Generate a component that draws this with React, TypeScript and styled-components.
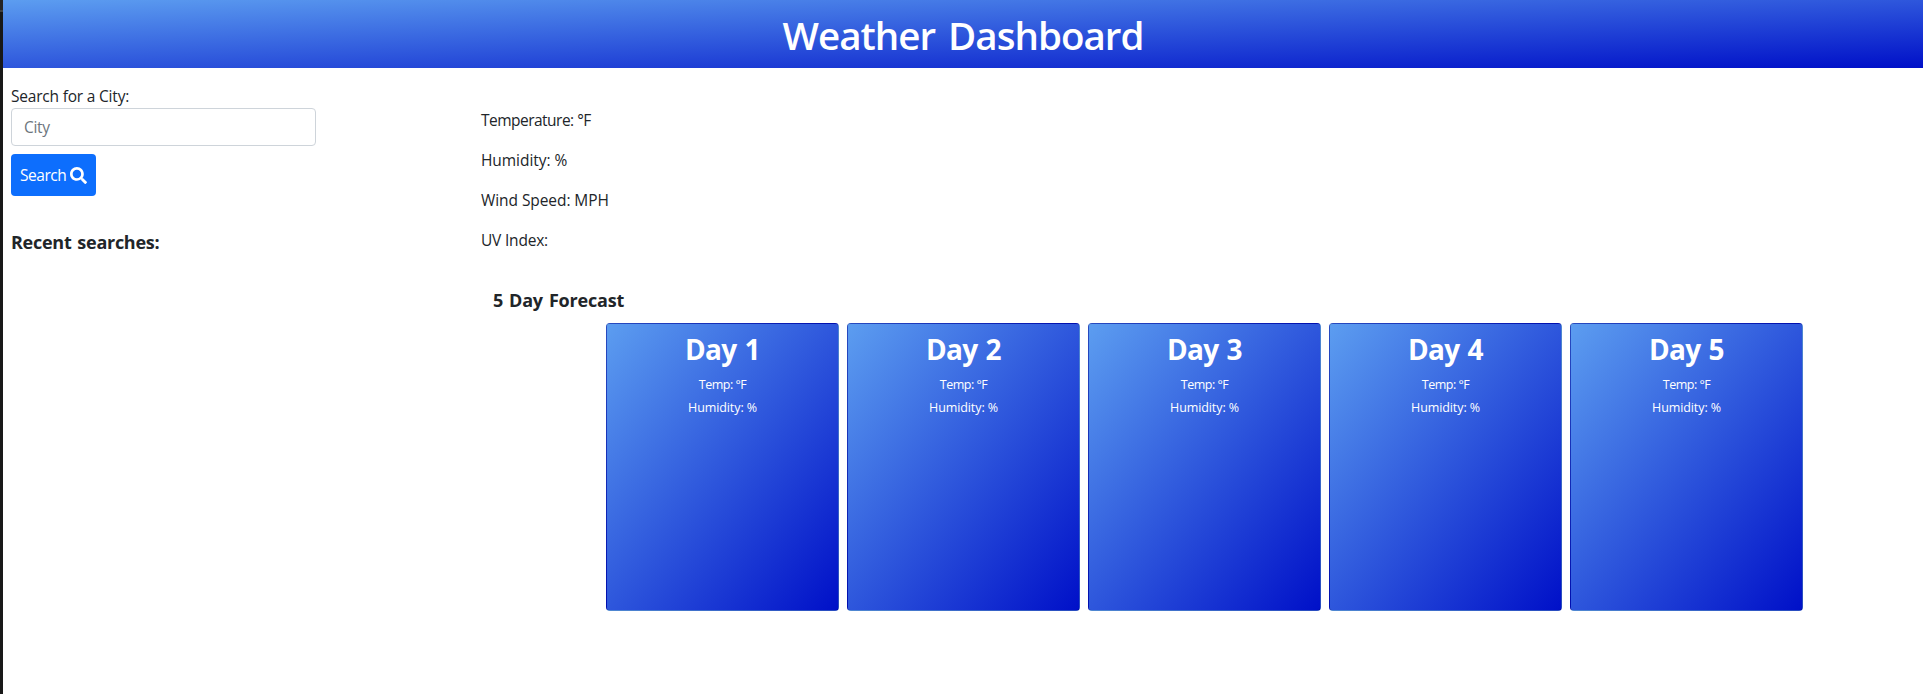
import React from 'react';
import styled, { createGlobalStyle } from 'styled-components';

const GlobalStyle = createGlobalStyle`
  *, *::before, *::after { box-sizing: border-box; }
  body {
    margin: 0;
    background: #fff;
    color: #212529;
    font-family: 'Open Sans', 'Noto Sans', sans-serif;
    font-size: 15.5px;
    line-height: 24px;
  }
`;

const gradient = 'linear-gradient(to bottom right, #5c9df0, #0010c8)';

const Window = styled.div`
  display: grid;
  grid-template-columns: 3px 1fr;
  height: 694px;
  overflow: hidden;
`;

const Edge = styled.div`
  background: linear-gradient(#252525 10px, #404040 10px, #404040 12px, #181818 12px);
`;

const Header = styled.header`
  height: 68px;
  padding-top: 11px;
  background: ${gradient};
  text-align: center;
`;

const Title = styled.h1`
  margin: 0;
  color: #fff;
  font-size: 38.5px;
  font-weight: 600;
  line-height: 48px;
  letter-spacing: -0.98px;
  word-spacing: 4px;
`;

const Main = styled.main`
  display: grid;
  grid-template-columns: 478px 1fr;
  padding-top: 16px;
`;

const SearchPanel = styled.aside`
  display: flex;
  flex-direction: column;
  align-items: flex-start;
  padding-left: 8px;
`;

const Text = styled.span<{ $spacing: number }>`
  letter-spacing: ${(p) => p.$spacing}px;
`;

const CityInput = styled.input`
  width: 305px;
  height: 38px;
  padding: 6px 12px;
  border: 1px solid #ced4da;
  border-radius: 4px;
  background: #fff;
  color: #212529;
  font: inherit;
  letter-spacing: -0.3px;
  &::placeholder { color: #6c757d; opacity: 1; }
`;

const SearchButton = styled.button`
  display: flex;
  align-items: center;
  gap: 4px;
  width: 85px;
  height: 42px;
  margin-top: 8px;
  padding: 0 0 0 9px;
  border: 0;
  border-radius: 4px;
  background: #0d6efd;
  color: #fff;
  font: inherit;
`;

const SearchIcon = styled.svg`
  flex: none;
  width: 17px;
  height: 17px;
  fill: currentColor;
`;

const SectionTitle = styled.h5<{ $spacing: number }>`
  margin: 0;
  font-size: 18px;
  font-weight: 700;
  line-height: 24px;
  letter-spacing: ${(p) => p.$spacing}px;
  word-spacing: 1.5px;
`;

const RecentSearches = styled.section`
  margin-top: 34px;
`;

const Conditions = styled.div`
  display: flex;
  flex-direction: column;
  gap: 16px;
  padding-top: 24px;
`;

const Forecast = styled.section`
  padding: 36px 0 0 12px;
`;

const Cards = styled.div`
  display: flex;
  gap: 8px;
  margin: 11px 0 0 113px;
`;

const Card = styled.article`
  width: 233px;
  height: 288px;
  padding-top: 8px;
  border: 1px solid rgba(0, 0, 0, 0.125);
  border-radius: 4px;
  background: ${gradient};
  color: #fff;
  text-align: center;
`;

const Day = styled.h3`
  margin: 0 0 7px;
  font-size: 28px;
  font-weight: 700;
  line-height: 34px;
  letter-spacing: -0.7px;
  word-spacing: 1.5px;
`;

const Reading = styled.p<{ $spacing: number }>`
  margin: 0;
  font-size: 12.5px;
  line-height: 23px;
  letter-spacing: ${(p) => p.$spacing}px;
`;

const conditions = [
  { label: 'Temperature: °F', spacing: -0.52 },
  { label: 'Humidity: %', spacing: -0.06 },
  { label: 'Wind Speed: MPH', spacing: -0.07 },
  { label: 'UV Index:', spacing: -0.2 },
];

export default function App() {
  return (
    <>
      <GlobalStyle />
      <Window>
        <Edge />
        <div>
          <Header>
            <Title>Weather Dashboard</Title>
          </Header>
          <Main>
            <SearchPanel>
              <Text as="label" htmlFor="city" $spacing={-0.2}>Search for a City:</Text>
              <CityInput id="city" placeholder="City" />
              <SearchButton type="button">
                <Text $spacing={-0.45}>Search</Text>
                <SearchIcon viewBox="0 0 512 512" aria-hidden="true">
                  <path d="M505 442.7 405.3 343c-4.5-4.5-10.6-7-17-7H372c27.6-35.3 44-79.7 44-128C416 93.1 322.9 0 208 0S0 93.1 0 208s93.1 208 208 208c48.3 0 92.7-16.4 128-44v16.3c0 6.4 2.5 12.5 7 17l99.7 99.7c9.4 9.4 24.6 9.4 33.9 0l28.3-28.3c9.4-9.4 9.4-24.6.1-34zM208 336c-70.7 0-128-57.2-128-128 0-70.7 57.2-128 128-128 70.7 0 128 57.2 128 128 0 70.7-57.2 128-128 128z" />
                </SearchIcon>
              </SearchButton>
              <RecentSearches>
                <SectionTitle $spacing={-0.27}>Recent searches:</SectionTitle>
              </RecentSearches>
            </SearchPanel>
            <div>
              <Conditions>
                {conditions.map((c) => (
                  <Text key={c.label} $spacing={c.spacing}>{c.label}</Text>
                ))}
              </Conditions>
              <Forecast>
                <SectionTitle $spacing={-0.2}>5 Day Forecast</SectionTitle>
                <Cards>
                  {[1, 2, 3, 4, 5].map((n) => (
                    <Card key={n}>
                      <Day>Day {n}</Day>
                      <Reading $spacing={-0.5}>Temp: °F</Reading>
                      <Reading $spacing={-0.1}>Humidity: %</Reading>
                    </Card>
                  ))}
                </Cards>
              </Forecast>
            </div>
          </Main>
        </div>
      </Window>
    </>
  );
}
